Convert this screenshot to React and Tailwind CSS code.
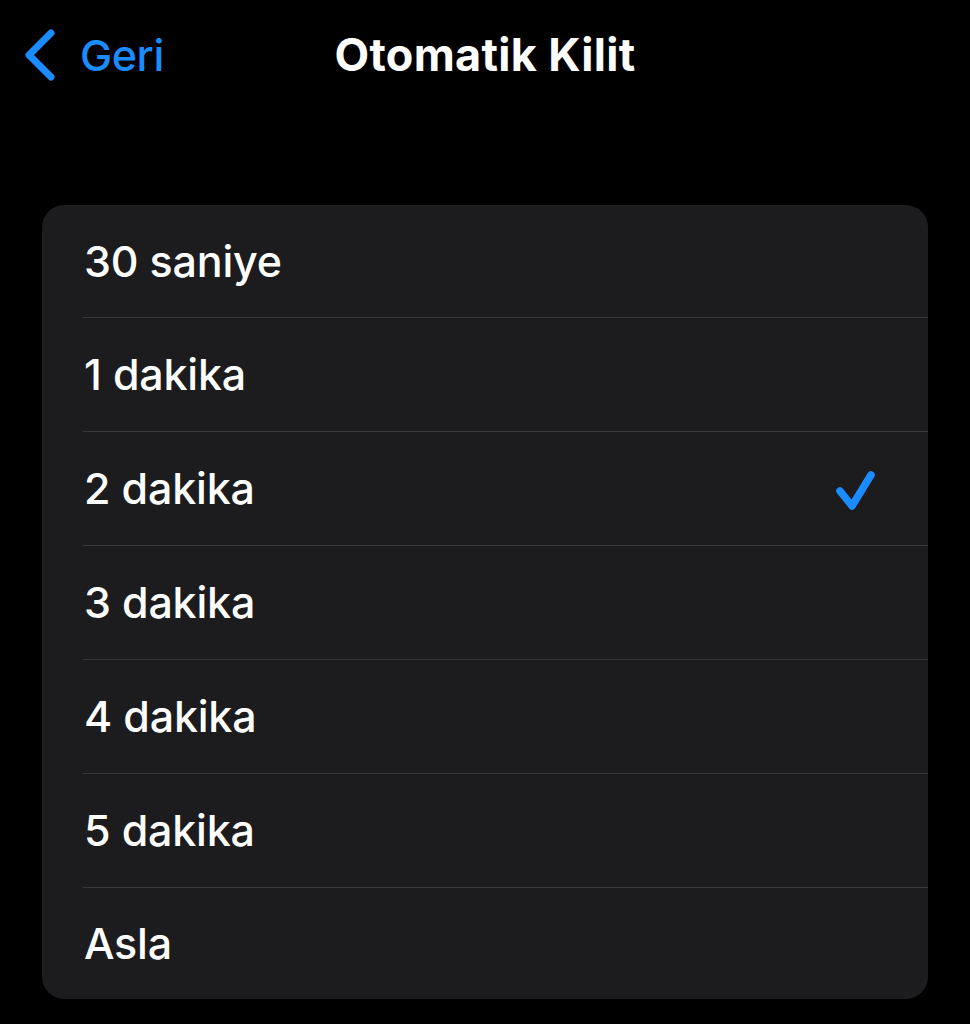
const options = ['30 saniye', '1 dakika', '2 dakika', '3 dakika', '4 dakika', '5 dakika', 'Asla'];

export default function App() {
  const selected = '2 dakika';

  return (
    <div className="min-h-screen w-[970px] bg-black text-white font-['Inter','Noto_Sans',sans-serif]">
      <header className="relative flex h-[114px] items-start pt-[28px]">
        <button className="flex items-center gap-[24px] pl-[22px] text-[#1a8cff]">
          <svg width="34" height="54" viewBox="0 0 34 54" fill="none">
            <path d="M29 5 L7 27 L29 49" stroke="currentColor" strokeWidth="7" strokeLinecap="round" strokeLinejoin="round" />
          </svg>
          <span className="text-[43px] font-medium leading-none tracking-[-0.4px]">Geri</span>
        </button>
        <h1 className="absolute left-0 right-0 top-[32px] text-center text-[45px] font-bold leading-none tracking-[0.3px]">
          Otomatik Kilit
        </h1>
      </header>

      <div className="px-[42px] pt-[91px]">
        <ul className="w-[886px] overflow-hidden rounded-[22px] bg-[#1c1c1e]">
          {options.map((opt, i) => (
            <li key={opt} className="pl-[41px]">
              <div
                className={`flex items-center pr-[50px] ${i > 0 ? 'border-t border-[#38383a]' : ''} ${
                  i === 0 || i === options.length - 1 ? 'h-[112px]' : 'h-[114px]'
                }`}
              >
                <span className="flex-1 pl-[1px] text-[43px] font-medium leading-none tracking-[-0.2px]">{opt}</span>
                {opt === selected && (
                  <svg width="48" height="48" viewBox="0 0 48 48" fill="none" className="text-[#1a8cff]">
                    <path d="M10 26 L22 41 L41 10" stroke="currentColor" strokeWidth="7.5" strokeLinecap="round" strokeLinejoin="round" />
                  </svg>
                )}
              </div>
            </li>
          ))}
        </ul>
      </div>
    </div>
  );
}
